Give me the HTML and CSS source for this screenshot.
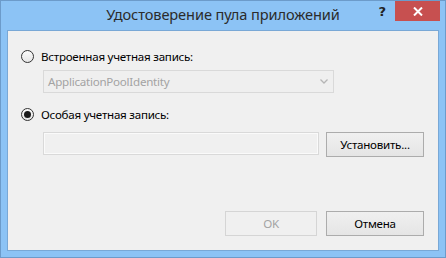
FILE: index.html
```html
<!DOCTYPE html>
<html lang="ru">
<head>
    <meta charset="UTF-8">
    <title>Удостоверение пула приложений</title>
    <link rel="stylesheet" href="styles.css">
</head>
<body>
    <div class="window">
        <div class="titlebar">
            <span class="title">Удостоверение пула приложений</span>
            <div class="controls">
                <span class="help">?</span>
                <button type="button" class="close">
                    <svg width="10" height="9" viewBox="0 0 10 9">
                        <path d="M1 0.5 L9 8.5 M9 0.5 L1 8.5" stroke="#fff" stroke-width="2"/>
                    </svg>
                </button>
            </div>
        </div>
        <div class="client">
            <label class="radio-row">
                <span class="radio"></span>
                Встроенная учетная запись:
            </label>
            <div class="combo">
                <span>ApplicationPoolIdentity</span>
                <svg width="8" height="5" viewBox="0 0 8 5">
                    <path d="M0.5 0.5 L4 4 L7.5 0.5" stroke="#b5b5b5" stroke-width="1.3" fill="none"/>
                </svg>
            </div>
            <label class="radio-row second">
                <span class="radio checked"></span>
                Особая учетная запись:
            </label>
            <div class="input-row">
                <div class="textbox"></div>
                <button type="button" class="button set">Установить...</button>
            </div>
            <div class="footer">
                <button type="button" class="button ok" disabled>OK</button>
                <button type="button" class="button cancel">Отмена</button>
            </div>
        </div>
    </div>
</body>
</html>
```

FILE: styles.css
```css
body {
    margin: 0;
    font-family: 'Noto Sans', sans-serif;
    font-size: 11.6px;
    letter-spacing: -0.25px;
    color: #000;
}
.window {
    width: 446px;
    height: 258px;
    box-sizing: border-box;
    border: 1px solid #6c9bca;
    background: #8cc3f5;
    padding: 0 6px 6px 6px;
    display: flex;
    flex-direction: column;
}
.titlebar {
    height: 29px;
    display: grid;
    grid-template-columns: 1fr auto 1fr;
    align-items: start;
    margin: 0 -6px;
}
.title {
    grid-column: 2;
    font-size: 14.6px;
    letter-spacing: -0.1px;
    color: #2b2b2b;
    line-height: 18px;
    padding-top: 4px;
}
.controls {
    grid-column: 3;
    justify-self: end;
    display: flex;
    align-items: flex-start;
    padding-right: 5px;
}
.help {
    font-family: 'DejaVu Sans', sans-serif;
    font-weight: bold;
    font-size: 13px;
    letter-spacing: 0;
    color: #222;
    line-height: 16px;
    padding-top: 3px;
    margin-right: 9px;
}
.close {
    width: 45px;
    height: 20px;
    border: none;
    padding: 0;
    background: #c75050;
    display: flex;
    align-items: center;
    justify-content: center;
}
.client {
    flex: 1;
    border: 1px solid #79a8d6;
    background: #f0f0f0;
    padding: 19px 0 0 13px;
    display: flex;
    flex-direction: column;
}
.radio-row {
    display: flex;
    align-items: center;
    gap: 7px;
    height: 13px;
    line-height: 13px;
}
.radio-row.second {
    margin-top: 15px;
}
.radio {
    width: 11px;
    height: 11px;
    border: 1px solid #333;
    border-radius: 50%;
    background: linear-gradient(#fbfbfb, #e6e6e6);
    display: flex;
    align-items: center;
    justify-content: center;
}
.radio.checked::after {
    content: '';
    width: 7px;
    height: 7px;
    border-radius: 50%;
    background: #1a1a1a;
}
.combo {
    margin: 7px 0 0 22px;
    width: 291px;
    height: 23px;
    box-sizing: border-box;
    border: 1px solid #d9d9d9;
    background: #efefef;
    color: #a3a3a3;
    display: flex;
    align-items: center;
    justify-content: space-between;
    padding: 0 5px 0 4px;
}
.input-row {
    margin: 11px 0 0 22px;
    display: flex;
    gap: 7px;
}
.textbox {
    width: 276px;
    height: 23px;
    box-sizing: border-box;
    border: 1px solid #d9d9d9;
    box-shadow: inset 0 0 0 1px #fafafa;
    background: #f0f0f0;
}
.button {
    height: 25px;
    box-sizing: border-box;
    border: 1px solid #acacac;
    background: linear-gradient(#f0f0f0, #e5e5e5);
    font-family: inherit;
    font-size: inherit;
    letter-spacing: inherit;
    color: #000;
    padding: 0;
}
.set {
    width: 98px;
}
.footer {
    margin-top: auto;
    margin-bottom: 14px;
    display: flex;
    justify-content: flex-end;
    gap: 9px;
    padding-right: 14px;
}
.ok {
    width: 92px;
    border-color: #d5d5d5;
    background: #f0f0f0;
    color: #a3a3a3;
}
.cancel {
    width: 98px;
}
```
